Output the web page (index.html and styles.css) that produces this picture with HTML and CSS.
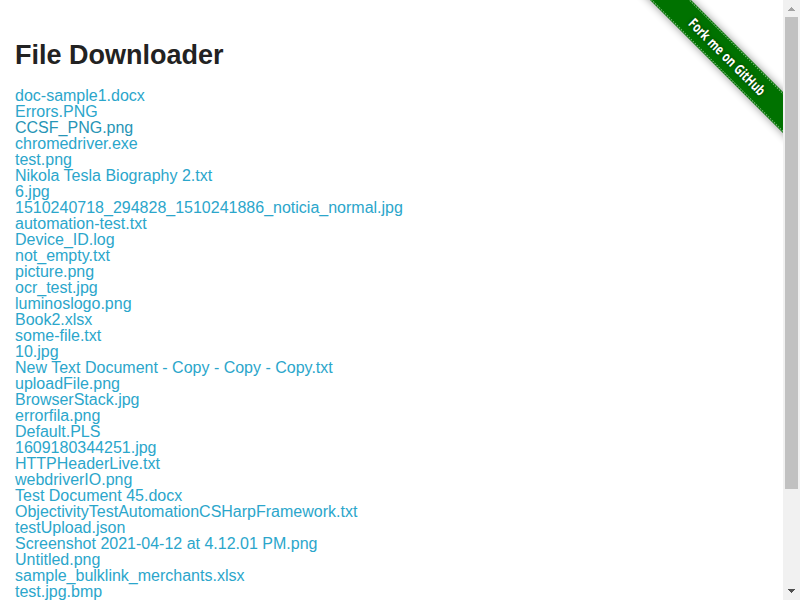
FILE: index.html
```html
<!DOCTYPE html>
<html lang="en">
<head>
<meta charset="utf-8">
<title>File Downloader</title>
<link rel="stylesheet" href="styles.css">
</head>
<body>
<div class="window">
<main class="page">
<h3>File Downloader</h3>
<ul class="files">
<li><a>doc-sample1.docx</a></li>
<li><a>Errors.PNG</a></li>
<li><a class="active">CCSF_PNG.png</a></li>
<li><a>chromedriver.exe</a></li>
<li><a>test.png</a></li>
<li><a>Nikola Tesla Biography 2.txt</a></li>
<li><a>6.jpg</a></li>
<li><a>1510240718_294828_1510241886_noticia_normal.jpg</a></li>
<li><a>automation-test.txt</a></li>
<li><a>Device_ID.log</a></li>
<li><a>not_empty.txt</a></li>
<li><a>picture.png</a></li>
<li><a>ocr_test.jpg</a></li>
<li><a>luminoslogo.png</a></li>
<li><a>Book2.xlsx</a></li>
<li><a>some-file.txt</a></li>
<li><a>10.jpg</a></li>
<li><a>New Text Document - Copy - Copy - Copy.txt</a></li>
<li><a>uploadFile.png</a></li>
<li><a>BrowserStack.jpg</a></li>
<li><a>errorfila.png</a></li>
<li><a>Default.PLS</a></li>
<li><a>1609180344251.jpg</a></li>
<li><a>HTTPHeaderLive.txt</a></li>
<li><a>webdriverIO.png</a></li>
<li><a>Test Document 45.docx</a></li>
<li><a>ObjectivityTestAutomationCSHarpFramework.txt</a></li>
<li><a>testUpload.json</a></li>
<li><a>Screenshot 2021-04-12 at 4.12.01 PM.png</a></li>
<li><a>Untitled.png</a></li>
<li><a>sample_bulklink_merchants.xlsx</a></li>
<li><a>test.jpg.bmp</a></li>
</ul>
<div class="ribbon">
<svg width="149" height="149" viewBox="0 0 149 149">
<defs><filter id="soft" x="-20%" y="-100%" width="140%" height="300%"><feGaussianBlur stdDeviation="4"/></filter></defs>
<g transform="translate(92.75 56.25) rotate(45)">
<rect class="shade" x="-130" y="-14.5" width="260" height="29" filter="url(#soft)"/>
<rect class="band" x="-130" y="-14.5" width="260" height="29"/>
<path class="stitch" d="M-130 -13.3H130M-130 13.3H130"/>
<text class="label" x="0.7" y="5.2" textLength="102" lengthAdjust="spacingAndGlyphs">Fork me on GitHub</text>
</g>
</svg>
</div>
</main>
<div class="scrollbar">
<svg class="arrow" width="17" height="17" shape-rendering="crispEdges"><path fill="#a3a3a3" d="M8 7h1v1h1v1h1v1h1v1H5v-1h1V9h1V8h1z"/></svg>
<div class="track"><div class="thumb"></div></div>
<svg class="arrow" width="17" height="17" shape-rendering="crispEdges"><path fill="#505050" d="M5 6h7v1h-1v1h-1v1H9v1H8V9H7V8H6V7H5z"/></svg>
</div>
</div>
</body>
</html>
```
FILE: styles.css
```css
* { box-sizing: border-box; }
body {
  margin: 0;
  overflow: hidden;
  background: #fff;
  color: #222;
  font: 16px/16px "Liberation Sans", Arial, sans-serif;
}
.window { display: flex; height: 600px; }
.page {
  position: relative;
  flex: 1;
  overflow: hidden;
  padding: 36px 15px 0;
}
h3 {
  margin: 0 0 14px;
  font-size: 27px;
  line-height: 38px;
  font-weight: bold;
}
.files { list-style: none; margin: 0; padding: 0; }
.files li { height: 16px; white-space: nowrap; }
.files a { color: #2ba6cb; }
.files .active { color: #2795b6; }
.ribbon { position: absolute; top: 0; right: 0; width: 149px; height: 149px; }
.ribbon svg { display: block; }
.shade { fill: #000; opacity: .42; }
.band { fill: #007200; }
.stitch { fill: none; stroke: #80bb80; stroke-width: 1; stroke-dasharray: 1.6 1.2; }
.label {
  font: bold 14px "Open Sans", "Noto Sans", sans-serif;
  word-spacing: .8px;
  text-anchor: middle;
  fill: #fff;
  text-shadow: 0 0 4px rgba(0, 0, 0, .6);
}
.scrollbar { display: flex; flex-direction: column; width: 17px; background: #f1f1f1; }
.arrow { display: block; }
.track { flex: 1; padding: 0 2px; }
.thumb { height: 472px; background: #c1c1c1; }
```
